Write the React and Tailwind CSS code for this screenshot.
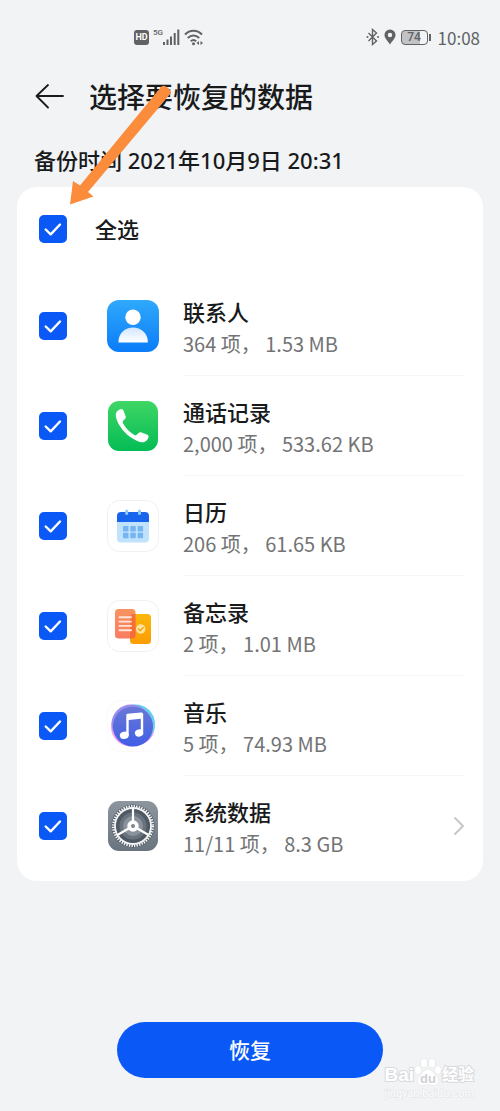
import { useState } from "react";

const ITEMS = [
  { id: "contacts", name: "联系人", detail: "364 项， 1.53 MB", Icon: ContactsIcon },
  { id: "calls", name: "通话记录", detail: "2,000 项， 533.62 KB", Icon: PhoneIcon },
  { id: "calendar", name: "日历", detail: "206 项， 61.65 KB", Icon: CalendarIcon },
  { id: "notes", name: "备忘录", detail: "2 项， 1.01 MB", Icon: NotesIcon },
  { id: "music", name: "音乐", detail: "5 项， 74.93 MB", Icon: MusicIcon },
  { id: "system", name: "系统数据", detail: "11/11 项， 8.3 GB", Icon: SettingsIcon, more: true },
];

function ContactsIcon() {
  return (
    <svg viewBox="0 0 52 52" className="size-13 shrink-0" aria-hidden="true">
      <defs>
        <linearGradient id="contacts-bg" x1="0" y1="0" x2="0" y2="1">
          <stop offset="0" stopColor="#2fa9fb" />
          <stop offset="1" stopColor="#0a7cf9" />
        </linearGradient>
        <linearGradient id="contacts-body" x1="0" y1="0" x2="0" y2="1">
          <stop offset="0" stopColor="#d3e6fd" />
          <stop offset="1" stopColor="#ffffff" />
        </linearGradient>
      </defs>
      <rect width="52" height="52" rx="12" fill="url(#contacts-bg)" />
      <circle cx="26" cy="17.3" r="7.7" fill="#fff" />
      <path d="M11.5 42.5v-1C11.5 33.5 18 27.5 26 27.5S40.8 33.5 40.8 41.5v1z" fill="url(#contacts-body)" />
    </svg>
  );
}

function PhoneIcon() {
  return (
    <svg viewBox="0 0 52 52" className="size-13 shrink-0" aria-hidden="true">
      <defs>
        <linearGradient id="phone-bg" x1="0" y1="0" x2="0" y2="1">
          <stop offset="0" stopColor="#3fd665" />
          <stop offset="1" stopColor="#04bc55" />
        </linearGradient>
      </defs>
      <rect x="1" y="1" width="50" height="50" rx="11" fill="url(#phone-bg)" />
      <path
        d="M9.8 11.8c1.5-1.7 3.3-2.7 4.7-2.7 1 0 1.7.8 2.1 1.8l1.9 5c.5 1.3.3 2.3-.6 3.2l-1.7 1.6c-.6.7-.7 1.3-.3 2.2 2.8 5.2 6.3 9 11.5 12 .9.5 1.7.4 2.3-.2l1.9-1.7c.9-.8 1.9-1 3.100-.5l5.200 2.100c1.300.5 1.900 1.500 1.600 2.700-.5 2-2.300 4.300-4.400 4.800-3.200.8-8.700-1.300-14.200-5.400C15.900 31.500 10.200 23.500 9 17c-.4-2.100-.2-4.100.8-5.200z"
        fill="#fff"
      />
    </svg>
  );
}

function CalendarIcon() {
  return (
    <svg viewBox="0 0 52 52" className="size-13 shrink-0" aria-hidden="true">
      <rect x="0.5" y="0.5" width="51" height="51" rx="12" fill="#fff" stroke="#f1f1f2" />
      <path d="M10 20h32v18.500a4 4 0 0 1-4 4H14a4 4 0 0 1-4-4z" fill="#bfe3fd" />
      <path d="M10 22v-6a4 4 0 0 1 4-4h24a4 4 0 0 1 4 4v6z" fill="#1765ec" />
      <g fill="#76b5f0">
        <rect x="16" y="26" width="5.5" height="5.5" rx="0.8" />
        <rect x="23.3" y="26" width="5.5" height="5.5" rx="0.8" />
        <rect x="30.6" y="26" width="5.5" height="5.5" rx="0.8" />
        <rect x="16" y="32.8" width="5.5" height="5.5" rx="0.8" />
        <rect x="23.3" y="32.8" width="5.5" height="5.5" rx="0.8" />
        <rect x="30.6" y="32.8" width="5.5" height="5.5" rx="0.8" />
      </g>
      <g fill="#8fc6f7">
        <rect x="18.2" y="9.5" width="3" height="5.5" rx="1.5" />
        <rect x="31" y="9.5" width="3" height="5.5" rx="1.5" />
      </g>
    </svg>
  );
}

function NotesIcon() {
  return (
    <svg viewBox="0 0 52 52" className="size-13 shrink-0" aria-hidden="true">
      <defs>
        <linearGradient id="notes-back" x1="0" y1="0" x2="0" y2="1">
          <stop offset="0" stopColor="#fbb70b" />
          <stop offset="1" stopColor="#fb9d05" />
        </linearGradient>
        <linearGradient id="notes-front" x1="0" y1="0" x2="0" y2="1">
          <stop offset="0" stopColor="#f9935f" />
          <stop offset="1" stopColor="#fa7c62" />
        </linearGradient>
      </defs>
      <rect x="0.5" y="0.5" width="51" height="51" rx="12" fill="#fff" stroke="#f1f1f2" />
      <rect x="23" y="14" width="21" height="30" rx="3.5" fill="url(#notes-back)" />
      <rect x="8" y="9" width="20.5" height="29.5" rx="3.5" fill="url(#notes-front)" />
      <path d="M23 17.5a3.5 3.5 0 0 1 3.5-3.5h2v21a3.5 3.5 0 0 1-3.5 3.5h-2z" fill="#f0672a" opacity="0.75" />
      <path d="M12.5 17.3h11.5M12.5 21.6h11.5M12.5 25.9h11.5M12.5 30.2h11.5" stroke="#ffe6dc" strokeWidth="1.9" strokeLinecap="round" />
      <circle cx="33.7" cy="29" r="4.7" fill="#fde5a0" />
      <path d="m31.5 29 1.700 1.700 3-3.300" fill="none" stroke="#f0a010" strokeWidth="1.3" strokeLinecap="round" />
    </svg>
  );
}

function MusicIcon() {
  return (
    <svg viewBox="0 0 52 52" className="size-13 shrink-0" aria-hidden="true">
      <defs>
        <linearGradient id="music-disc" x1="0" y1="0" x2="0" y2="1">
          <stop offset="0" stopColor="#6a78d6" />
          <stop offset="1" stopColor="#3f5fe6" />
        </linearGradient>
      </defs>
      <rect x="0.5" y="0.5" width="51" height="51" rx="12" fill="#fff" stroke="#fafafa" />
      <circle cx="23.5" cy="27" r="19.5" fill="#f5a3ea" />
      <circle cx="29" cy="27" r="18.5" fill="#e58bf0" />
      <circle cx="28.5" cy="24" r="19.5" fill="#66cdf0" />
      <circle cx="24" cy="24" r="19.5" fill="#9b8cf0" />
      <circle cx="26" cy="26.5" r="20" fill="url(#music-disc)" />
      <path d="M20.3 13.8 34 12.5c1.3-.1 2.2.8 2.2 2V32h-2.400V18.800L21.700 20v15.500h-2.400V15.500c0-.9.300-1.600 1-1.700z" fill="#fff" />
      <ellipse cx="17.3" cy="35.3" rx="4.5" ry="3.6" fill="#fff" transform="rotate(-15 17.3 35.3)" />
      <ellipse cx="32.1" cy="33" rx="4.3" ry="3.5" fill="#fff" transform="rotate(-15 32.1 33)" />
    </svg>
  );
}

function SettingsIcon() {
  return (
    <svg viewBox="0 0 52 52" className="size-13 shrink-0" aria-hidden="true">
      <defs>
        <linearGradient id="settings-bg" x1="0" y1="0" x2="0" y2="1">
          <stop offset="0" stopColor="#8d969f" />
          <stop offset="1" stopColor="#69747f" />
        </linearGradient>
      </defs>
      <rect x="1" y="1" width="50" height="50" rx="11" fill="url(#settings-bg)" />
      <circle cx="26" cy="26" r="21.5" fill="#525c66" />
      <circle cx="26" cy="26" r="19.7" fill="none" stroke="#f4f5f6" strokeWidth="2.6" strokeDasharray="1.4 1.179" />
      <circle cx="26" cy="26" r="18" fill="none" stroke="#f4f5f6" strokeWidth="1.8" />
      <circle cx="26" cy="26" r="16.5" fill="#4f5963" />
      <circle cx="26" cy="26" r="13.5" fill="#69737d" />
      <circle cx="26" cy="26" r="10" fill="#8a939c" />
      <path d="M26 26V8M26 26l15.6 9M26 26l-15.6 9" stroke="#fff" strokeWidth="2.2" />
      <circle cx="26" cy="26" r="5.7" fill="#fff" />
      <circle cx="26" cy="26" r="2" fill="#7b858e" />
    </svg>
  );
}

function Checkbox({ checked, onChange, label }) {
  return (
    <label className="grid size-7 shrink-0 cursor-pointer place-items-center">
      <input
        type="checkbox"
        aria-label={label}
        checked={checked}
        onChange={onChange}
        className="col-start-1 row-start-1 size-7 cursor-pointer appearance-none rounded-[5px] border-2 border-gray-300 checked:border-[#0a59f7] checked:bg-[#0a59f7]"
      />
      {checked && (
        <svg viewBox="0 0 28 28" className="pointer-events-none col-start-1 row-start-1 size-7" aria-hidden="true">
          <path d="m6.700 14.500 5 4.800 9.300-9.800" fill="none" stroke="#fff" strokeWidth="2.4" strokeLinecap="round" strokeLinejoin="round" />
        </svg>
      )}
    </label>
  );
}

function StatusBar() {
  return (
    <div className="flex h-[74px] items-center justify-between pr-5 pl-[134px] text-[#606264]">
      <div className="flex items-center">
        <span className="flex h-[15px] w-[15px] items-center justify-center rounded-[3px] bg-[#606264] text-[9px] leading-none font-bold text-white">
          HD
        </span>
        <span className="ml-1 self-start text-[8px] leading-none font-medium">5G</span>
        <svg viewBox="0 0 17 16" className="h-4 w-[17px]" fill="currentColor" aria-hidden="true">
          <rect x="0" y="13" width="2" height="3" />
          <rect x="3.5" y="10.5" width="2" height="5.5" />
          <rect x="7" y="7.5" width="2" height="8.5" />
          <rect x="10.7" y="4" width="2" height="12" />
          <rect x="14.3" y="0.5" width="2" height="15.5" />
        </svg>
        <svg viewBox="0 0 20 17" className="ml-1 h-[17px] w-5" fill="none" stroke="currentColor" strokeWidth="2" aria-hidden="true">
          <path d="M1 5.500c5-5 12-5 17 0M3.800 9c3.300-3.400 8.100-3.400 11.400 0M6.800 12.300c1.700-1.600 3.700-1.600 5.400 0" />
          <circle cx="9.5" cy="14.8" r="1.5" fill="currentColor" stroke="none" />
          <path d="m15 12-2.500 2 2.500 2zM16.500 12l2.500 2-2.500 2z" fill="currentColor" stroke="none" />
        </svg>
      </div>
      <div className="flex items-center">
        <svg viewBox="0 0 14 18" className="h-[18px] w-3.5" fill="none" stroke="currentColor" strokeWidth="1.4" aria-hidden="true">
          <path d="m2.500 5 8 8-4 3.500v-15l4 3.500-8 8" />
          <circle cx="1.5" cy="9" r="1" fill="currentColor" stroke="none" />
          <circle cx="12" cy="9" r="1" fill="currentColor" stroke="none" />
        </svg>
        <svg viewBox="0 0 12 16" className="ml-1 h-4 w-3" aria-hidden="true">
          <path d="M6 .5a5.500 5.500 0 0 0-5.500 5.500c0 3.500 3.500 6 5.500 9.500 2-3.500 5.500-6 5.500-9.500A5.500 5.500 0 0 0 6 .5zm0 3.300a2.200 2.200 0 1 1 0 4.400 2.200 2.200 0 0 1 0-4.400z" fill="currentColor" />
        </svg>
        <span className="ml-[5px] flex h-[15px] w-[27px] items-center justify-center rounded-[4px] border border-[#606264] bg-linear-to-r from-[#c2c3c5] from-70% to-transparent to-70% text-[12px] leading-none font-medium">
          74
        </span>
        <span className="ml-px h-[7px] w-[2px] bg-[#606264]" />
        <time className="ml-[7px] font-['Noto_Sans_CJK_SC',sans-serif] text-[17px] leading-none">10:08</time>
      </div>
    </div>
  );
}

function Watermark() {
  return (
    <div className="pointer-events-none absolute right-[26px] bottom-2.5 flex flex-col items-center text-white">
      <div className="flex items-end font-['Liberation_Sans','Noto_Sans_CJK_SC',sans-serif] text-[19px] leading-6 font-bold [paint-order:stroke_fill] [-webkit-text-stroke:2px_#d9dadc]">
        <span>Bai</span>
        <svg viewBox="0 0 28 30" className="h-[30px] w-7" aria-hidden="true">
          <g fill="#fff" stroke="#d9dadc" strokeWidth="0.8">
            <ellipse cx="4" cy="13" rx="3" ry="4" />
            <ellipse cx="10" cy="6" rx="3.2" ry="4.5" />
            <ellipse cx="18" cy="6" rx="3.2" ry="4.5" />
            <ellipse cx="24" cy="13" rx="3" ry="4" />
            <path d="M14 12.500c4 0 5 4 8 6.500 4.500 4 2.500 9-2.500 9-2 0-3.500-.5-5.500-.5s-3.500.5-5.500.5c-5 0-7-5-2.500-9 3-2.500 4-6.500 8-6.500z" />
          </g>
          <text x="14" y="26" fontSize="13" fontWeight="700" textAnchor="middle" fill="#cfd0d2" className="[-webkit-text-stroke:0]">
            du
          </text>
        </svg>
        <span className="text-[16px]">经验</span>
      </div>
      <span className="text-[11px] leading-[14px] [paint-order:stroke_fill] [-webkit-text-stroke:1px_#e2e3e5]">jingyan.baidu.com</span>
    </div>
  );
}

function App() {
  const [selected, setSelected] = useState(ITEMS.map((item) => item.id));

  const allSelected = selected.length === ITEMS.length;

  const toggleAll = () => {
    setSelected(allSelected ? [] : ITEMS.map((item) => item.id));
  };

  const toggleItem = (id) => {
    setSelected((current) =>
      current.includes(id) ? current.filter((other) => other !== id) : [...current, id]
    );
  };

  return (
    <main
      lang="zh-CN"
      className="relative flex min-h-screen flex-col bg-[#f1f3f5] pb-[33px] font-[Roboto,'Noto_Sans_CJK_SC',sans-serif] text-[#191a1b]"
    >
      <StatusBar />

      <header className="px-[34px]">
        <div className="flex h-[46px] items-center">
          <button type="button" aria-label="返回" className="cursor-pointer">
            <svg viewBox="0 0 30 28" className="h-7 w-[30px]" fill="none" stroke="currentColor" strokeWidth="1.8" strokeLinecap="round" strokeLinejoin="round" aria-hidden="true">
              <path d="M14 2 2.500 13 14 24.500M2.500 13H29" />
            </svg>
          </button>
          <h1 className="ml-[25px] pt-1 text-[28px] leading-9 font-medium">选择要恢复的数据</h1>
        </div>
        <p className="pt-6 pb-[11px] font-['Noto_Sans','Noto_Sans_CJK_SC',sans-serif] text-[22px] leading-8 font-medium">
          备份时间 2021年10月9日 20:31
        </p>
      </header>

      <section className="mx-[17px] mb-8 rounded-[20px] bg-white">
        <div className="flex h-[84px] items-center gap-7 px-[22px]">
          <Checkbox checked={allSelected} onChange={toggleAll} label="全选" />
          <span className="pt-1 text-[22px] leading-8 font-medium">全选</span>
        </div>
        <ul className="py-[5px]">
          {ITEMS.map(({ id, name, detail, Icon, more }) => (
            <li key={id} className="group flex h-[100px] items-center pr-[18px] pl-[22px]">
              <Checkbox checked={selected.includes(id)} onChange={() => toggleItem(id)} label={name} />
              <span className="mr-6 ml-10 flex">
                <Icon />
              </span>
              <div className="flex h-full flex-1 items-center justify-between border-b border-[#f7f7f8] group-last:border-0">
                <div className="pt-1">
                  <h2 className="text-[22px] leading-8 font-medium">{name}</h2>
                  <p className="font-['Noto_Sans_CJK_SC',sans-serif] text-[20px] leading-7 text-[#737475]">{detail}</p>
                </div>
                {more && (
                  <svg viewBox="0 0 12 20" className="h-5 w-3" fill="none" stroke="#c6c7c8" strokeWidth="2" strokeLinecap="round" aria-hidden="true">
                    <path d="m2 2 8 8-8 8" />
                  </svg>
                )}
              </div>
            </li>
          ))}
        </ul>
      </section>

      <button
        type="button"
        className="mx-auto mt-auto h-14 w-[266px] cursor-pointer rounded-full bg-[#0a59f7] pt-1 text-[21px] font-medium text-white"
      >
        恢复
      </button>

      {/* Pointer to the select-all checkbox */}
      <svg viewBox="0 0 104 122" className="pointer-events-none absolute top-[85px] left-[68px] h-[122px] w-[104px]" fill="#fb8c3c" aria-hidden="true">
        <path d="M2 119.500 5 96l7 4.500L93 2q2.500-2.500 6.500.5t3.500 5.500L20 107l5.500 4.500z" />
      </svg>

      <Watermark />
    </main>
  );
}

export default App;
